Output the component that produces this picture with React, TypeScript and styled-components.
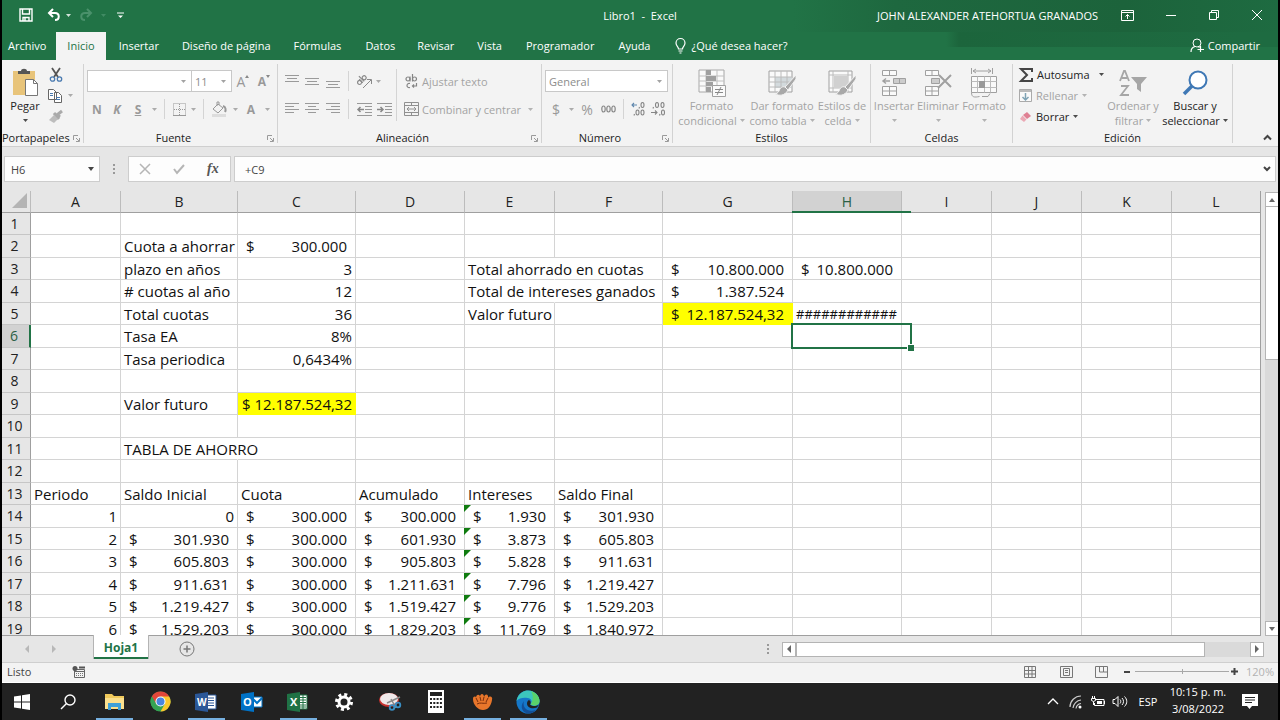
import React from "react";
import styled, { createGlobalStyle, css } from "styled-components";

const UI = `"Open Sans", "Noto Sans", sans-serif`;
const GREEN = "#217346";
const MUTED = "#a3a3a3";

const Global = createGlobalStyle`
  * { box-sizing: border-box; }
  body { margin: 0; background: #000; font: 11px/15px ${UI}; color: #222; }
  button, input, select { font: inherit; color: inherit; margin: 0; padding: 0; border: 0; background: none; border-radius: 0; }
  button { display: flex; align-items: center; justify-content: center; }
  svg { display: block; flex: none; overflow: visible; }
`;

const Window = styled.div`
  display: flex;
  flex-direction: column;
  height: 100vh;
  margin: 0 2px;
  overflow: hidden;
  background: #e6e6e6;
`;

/* ---------- title bar ---------- */
const TitleBar = styled.header`
  display: grid;
  grid-template-columns: 1fr auto 1fr;
  align-items: center;
  height: 32px;
  padding-bottom: 2px;
  color: #fff;
  background: linear-gradient(90deg, ${GREEN} 62%, #1e683f 70%, #1c633b 88%, #1e6b41 100%);
`;
const QuickAccess = styled.div`
  display: flex;
  align-items: center;
  padding-left: 7px;
`;
const QuickButton = styled.button<{ $w: number; $dim?: boolean }>`
  width: ${(p) => p.$w}px;
  height: 24px;
  color: ${(p) => (p.$dim ? "#4a916b" : "#fff")};
`;
const TitleText = styled.span`
  white-space: pre;
`;
const TitleRight = styled.div`
  display: flex;
  align-items: center;
  justify-content: flex-end;
`;
const Account = styled.span`
  margin-right: 8px;
  white-space: nowrap;
`;
const WindowButton = styled.button`
  width: 43px;
  height: 30px;
  color: #fff;
`;

/* ---------- tabs ---------- */
const TabBar = styled.nav`
  display: flex;
  height: 28px;
  color: #fff;
  background:
    linear-gradient(90deg, transparent 74%, #1c653c 75%, #1e6b41 97%) top / 100% 15px no-repeat,
    ${GREEN};
`;
const Tab = styled.button<{ $active?: boolean; $pad: number }>`
  padding: 0 ${(p) => p.$pad}px 1px;
  white-space: nowrap;
  ${(p) => p.$active && css`margin-left: 4px; background: #f3f3f3; color: ${GREEN};`}
`;
const Tell = styled.button`
  gap: 5px;
  margin-left: 13px;
  padding-bottom: 1px;
  white-space: nowrap;
`;
const Share = styled(Tell)`
  margin-left: auto;
  margin-right: 18px;
  gap: 3px;
`;

/* ---------- ribbon ---------- */
const Ribbon = styled.section`
  display: flex;
  height: 87px;
  padding: 4px 0;
  background: #f3f3f3;
  border-bottom: 1px solid #cfcfcf;
`;
const Group = styled.div<{ $w: number }>`
  display: flex;
  flex-direction: column;
  width: ${(p) => p.$w}px;
  height: 79px;
  border-right: 1px solid #d2d2d2;
`;
const GroupBody = styled.div`
  display: flex;
  flex: 1;
`;
const GroupFoot = styled.div`
  display: flex;
  align-items: center;
  height: 10px;
  line-height: 10px;
  font-weight: 500;
  color: #222;
  white-space: nowrap;
`;
const GroupName = styled.span`
  flex: 1;
  text-align: center;
`;
const Launcher = styled.button`
  width: 14px;
  height: 10px;
  color: #9a9a9a;
`;
const RibbonEnd = styled.div`
  display: flex;
  flex: 1;
  align-items: flex-end;
  justify-content: flex-end;
  padding-right: 6px;
  color: #444;
`;
const Big = styled.button<{ $w: number; $on?: boolean }>`
  flex-direction: column;
  justify-content: flex-start;
  width: ${(p) => p.$w}px;
  padding-top: 3px;
  color: ${(p) => (p.$on ? "#222" : MUTED)};
  white-space: nowrap;
`;
const BigIcon = styled.span`
  display: flex;
  align-items: center;
  height: 31px;
`;
const BigLine = styled.span`
  display: flex;
  align-items: center;
  justify-content: center;
  gap: 3px;
  height: 15px;
`;
const Stack = styled.div<{ $w?: number; $gap?: number; $top?: number }>`
  display: flex;
  flex-direction: column;
  gap: ${(p) => p.$gap ?? 6}px;
  padding-top: ${(p) => p.$top ?? 6}px;
  ${(p) => p.$w && css`width: ${p.$w}px;`}
`;
const Line = styled.div<{ $left?: number; $short?: boolean }>`
  display: flex;
  align-items: center;
  height: ${(p) => (p.$short ? 21 : 22)}px;
  padding-left: ${(p) => p.$left ?? 3}px;
  color: #999;
`;
const Tool = styled.button<{ $w: number }>`
  width: ${(p) => p.$w}px;
  height: 20px;
  font-size: 14px;
`;
const Letter = styled.span<{ $italic?: boolean; $line?: boolean }>`
  font-weight: 700;
  font-size: 12px;
  font-style: ${(p) => (p.$italic ? "italic" : "normal")};
  text-decoration: ${(p) => (p.$line ? "underline" : "none")};
`;
const Split = styled.span<{ $tall?: boolean }>`
  flex: none;
  width: 1px;
  height: ${(p) => (p.$tall ? 52 : 20)}px;
  margin: ${(p) => (p.$tall ? "5px 0 0" : "0 5px")};
  background: #d4d4d4;
`;
const Wide = styled.button<{ $on?: boolean; $gap?: number }>`
  justify-content: flex-start;
  gap: ${(p) => p.$gap ?? 3}px;
  height: 20px;
  color: ${(p) => (p.$on ? "#222" : MUTED)};
  white-space: nowrap;
`;
const Spacer = styled.span`
  width: 1px;
`;
const PickBox = styled.label<{ $w: number }>`
  display: grid;
  grid-template-columns: 1fr 10px;
  align-items: center;
  width: ${(p) => p.$w}px;
  height: 22px;
  background: #fff;
  border: 1px solid #c8c8c8;
  color: #8c8c8c;
  & + & { border-left: 0; }
`;
const Pick = styled.select`
  appearance: none;
  width: 100%;
  height: 20px;
  padding-left: 3px;
  outline: 0;
`;

/* ---------- formula bar ---------- */
const FormulaRow = styled.div`
  display: flex;
  align-items: flex-start;
  height: 44px;
  flex: none;
  padding: 9px 2px 0;
`;
const Field = styled.label<{ $w?: number }>`
  display: flex;
  align-items: center;
  height: 26px;
  padding: 0 4px 0 6px;
  background: #fdfdfd;
  border: 1px solid #cdcdcd;
  color: #444;
  ${(p) => (p.$w ? css`width: ${p.$w}px;` : css`flex: 1; padding-left: 10px;`)}
`;
const FieldInput = styled.input`
  flex: 1;
  min-width: 0;
  outline: 0;
`;
const Dots = styled.span`
  display: flex;
  justify-content: center;
  align-items: center;
  width: 28px;
  height: 26px;
`;
const FxBox = styled.div`
  display: flex;
  justify-content: space-around;
  align-items: center;
  width: 103px;
  height: 26px;
  margin-right: 3px;
  background: #fdfdfd;
  border: 1px solid #cdcdcd;
  color: #b5b5b5;
`;
const Fx = styled.button`
  font: italic 700 14px "Liberation Serif", serif;
  color: #555;
`;

/* ---------- sheet ---------- */
const SheetArea = styled.main`
  display: flex;
  flex: 1;
  min-height: 0;
`;
const GridPane = styled.div`
  flex: 1;
  min-width: 0;
  overflow: hidden;
  border-right: 1px solid #9f9f9f;
  border-bottom: 1px solid #9f9f9f;
`;
const Table = styled.table`
  width: 100%;
  table-layout: fixed;
  border-collapse: separate;
  border-spacing: 0;
  background: #fff;
  font-size: 15px;
  line-height: 21px;
  color: #111;
`;
const Col = styled.col<{ $w?: number }>`
  ${(p) => p.$w && css`width: ${p.$w}px;`}
`;
const Row = styled.tr`
  height: 22px;
  &:nth-child(even) { height: 23px; }
`;
const ColHead = styled.th<{ $active?: boolean }>`
  height: 22px;
  padding: 0;
  font-weight: 400;
  font-size: 14px;
  line-height: 21px;
  color: ${(p) => (p.$active ? "#2b6044" : "#222")};
  background: ${(p) => (p.$active ? "#d2d2d2" : "#e6e6e6")};
  border-right: 1px solid #bcbcbc;
  border-bottom: 1px solid #9f9f9f;
  &:last-child { border-right: 0; }
  ${(p) => p.$active && css`
    position: relative;
    z-index: 1;
    &::after {
      content: "";
      position: absolute;
      left: -1px;
      right: -10px;
      bottom: -1px;
      height: 2px;
      background: ${GREEN};
    }
  `}
`;
const Corner = styled.th`
  height: 22px;
  padding: 0 3px 2px 10px;
  background: #e6e6e6;
  border-right: 1px solid #bcbcbc;
  border-bottom: 1px solid #9f9f9f;
`;
const RowHead = styled.th<{ $active?: boolean }>`
  padding: 0 3px 0 0;
  font-weight: 400;
  font-size: 14px;
  line-height: 20px;
  color: ${(p) => (p.$active ? "#2b6044" : "#222")};
  background: ${(p) => (p.$active ? "#d2d2d2" : "#e6e6e6")};
  border-right: ${(p) => (p.$active ? `2px solid ${GREEN}` : "1px solid #9f9f9f")};
  border-bottom: 1px solid #c6c6c6;
`;
const Cell = styled.td<{ $fill?: boolean; $right?: boolean; $spill?: boolean }>`
  position: relative;
  z-index: ${(p) => (p.$spill ? 1 : "auto")};
  padding: 0 3px;
  white-space: nowrap;
  text-align: ${(p) => (p.$right ? "right" : "left")};
  background: ${(p) => (p.$fill ? "#ffff00" : "transparent")};
  border-right: 1px solid ${(p) => (p.$fill ? "#ffff00" : p.$spill ? "#ffffff" : "#d4d4d4")};
  border-bottom: 1px solid ${(p) => (p.$fill ? "#ffff00" : "#d4d4d4")};
  line-height: 20px;
  &:last-child { border-right: 0; }
`;
const Money = styled.span<{ $tight?: boolean }>`
  display: flex;
  justify-content: space-between;
  padding: ${(p) => (p.$tight ? "0 0 0 1px" : "0 5px")};
`;
const Hashes = styled.span`
  font-size: 13px;
`;
const Flag = styled.i`
  position: absolute;
  left: -1px;
  top: 0;
  border-top: 7px solid #107c10;
  border-right: 7px solid transparent;
`;
const Selection = styled.i`
  position: absolute;
  z-index: 2;
  left: -2px;
  right: -11px;
  top: -2px;
  bottom: -2px;
  border: 2px solid ${GREEN};
  &::after {
    content: "";
    position: absolute;
    right: -4px;
    bottom: -4px;
    width: 6px;
    height: 6px;
    background: ${GREEN};
    border: solid #fff;
    border-width: 1px 0 0 1px;
  }
`;
const VScroll = styled.div`
  display: flex;
  flex-direction: column;
  width: 17px;
  padding: 1px 0 0 4px;
`;
const ScrollButton = styled.button`
  flex: none;
  width: 14px;
  height: 15px;
  background: #fff;
  border: 1px solid #b4b4b4;
  color: #666;
`;
const VTrack = styled.div`
  flex: 1;
  width: 14px;
  background: #dadada;
`;
const VThumb = styled.div`
  height: 37%;
  background: #fff;
  border: 1px solid #b4b4b4;
  border-top: 0;
`;

/* ---------- sheet tabs and status ---------- */
const SheetTabs = styled.div`
  display: flex;
  flex: none;
  align-items: center;
  height: 26px;
  color: #b8b8b8;
`;
const NavArrow = styled.button`
  width: 27px;
  height: 24px;
  &:first-child { margin-left: 11px; }
`;
const SheetTab = styled.button`
  align-self: flex-start;
  width: 56px;
  height: 24px;
  margin: -1px 27px 0 26px;
  background: #fff;
  border: solid #b4b4b4;
  border-width: 0 1px;
  box-shadow: inset 0 -2px ${GREEN};
  color: ${GREEN};
  font-weight: 700;
  font-size: 12px;
  position: relative;
`;
const AddSheet = styled.button`
  width: 22px;
  height: 22px;
  color: #777;
`;
const HScroll = styled.div`
  display: flex;
  width: 40%;
  margin: 0 14px 0 auto;
  align-items: center;
`;
const HTrack = styled.div`
  flex: 1;
  height: 15px;
  background: #dadada;
`;
const HThumb = styled.div`
  width: 90%;
  height: 15px;
  background: #fff;
  border: 1px solid #b4b4b4;
`;
const Status = styled.footer`
  display: flex;
  flex: none;
  align-items: center;
  height: 21px;
  padding: 0 4px 2px 5px;
  background: #f3f3f3;
  border-top: 1px solid #cfcfcf;
  border-bottom: 1px solid #fff;
  color: #444;
`;
const StatusIcon = styled.button<{ $w: number }>`
  width: ${(p) => p.$w}px;
  height: 18px;
`;
const StatusRight = styled.div`
  display: flex;
  align-items: center;
  margin-left: auto;
`;
const Zoom = styled.input`
  appearance: none;
  width: 94px;
  height: 11px;
  background:
    linear-gradient(#a8a8a8, #a8a8a8) center / 1px 5px no-repeat,
    linear-gradient(#a8a8a8, #a8a8a8) center / 100% 1px no-repeat;
  &::-webkit-slider-thumb { appearance: none; width: 1px; height: 1px; }
`;
const Percent = styled.span`
  width: 34px;
  text-align: right;
  color: #b2b2b2;
`;

/* ---------- taskbar ---------- */
const Taskbar = styled.div`
  display: flex;
  flex: none;
  height: 37px;
  padding-right: 9px;
  background: #222;
  color: #fff;
`;
const TaskItem = styled.button<{ $running?: boolean }>`
  width: 46px;
  height: 37px;
  color: #fff;
  position: relative;
  &:first-child { margin-left: -3px; }
  ${(p) => p.$running && css`
    &::after {
      content: "";
      position: absolute;
      left: 5px;
      right: 4px;
      bottom: 0;
      height: 2px;
      background: #76b0e0;
    }
  `}
`;
const Tray = styled.div`
  display: flex;
  align-items: center;
  margin-left: auto;
`;
const TrayButton = styled.button<{ $w: number }>`
  width: ${(p) => p.$w}px;
  height: 37px;
`;
const Clock = styled.time`
  width: 66px;
  padding-bottom: 4px;
  text-align: center;
  line-height: 17px;
  white-space: nowrap;
`;

/* ---------- icons ---------- */
type IconProps = { w: number; h: number; sw?: number; children: React.ReactNode };
const Icon = ({ w, h, sw = 1, children }: IconProps) => (
  <svg width={w} height={h} viewBox={`0 0 ${w} ${h}`} fill="none" stroke="currentColor" strokeWidth={sw} aria-hidden="true">
    {children}
  </svg>
);
const Caret = () => (
  <svg width="5" height="3" viewBox="0 0 5 3" aria-hidden="true"><path d="M0 0h5L2.5 3z" fill="currentColor" opacity="0.8" /></svg>
);
const Arrow = ({ d }: { d: "up" | "down" | "left" | "right" }) => (
  <svg width="8" height="8" viewBox="0 0 8 8" fill="currentColor" aria-hidden="true">
    <path d={{ up: "M1 6h6L4 2z", down: "M1 2h6L4 6z", left: "M6 0v8L2 4z", right: "M2 0v8l4-4z" }[d]} />
  </svg>
);
const Lines = ({ rows, top = 0 }: { rows: [number, number][]; top?: number }) => (
  <Icon w={14} h={18}>
    {rows.map(([a, b], i) => <path key={i} d={`M${a} ${top + i * 3 + 0.5}H${b}`} stroke="#9a9a9a" />)}
  </Icon>
);
const DotsIcon = () => (
  <svg width="2" height="11" viewBox="0 0 2 11" fill="#999" aria-hidden="true"><path d="M0 0h2v2H0zM0 4h2v2H0zM0 8h2v2H0z" /></svg>
);
const LaunchIcon = () => (
  <Icon w={7} h={7}><path d="M.5 5V.5H5M3 3l3 3M6.500 3v3.500H3" /></Icon>
);
const Brush = () => (
  <>
    <path d="M29 6l-11 12 3 3 8-11z" fill="#a8a8a8" stroke="#f3f3f3" />
    <path d="M18 18c-3-1-5 1-6 4-1 2-3 3-4 3 4 2 10 2 13-4z" fill="#a8a8a8" stroke="#f3f3f3" />
  </>
);
const TableCells = ({ tone }: { tone: string }) => (
  <>
    <path d="M2 2h23v21H2z" fill="#fafafa" stroke="#a0a0a0" />
    <path d="M8 8h17v11H8z" fill={tone} stroke="none" />
    <path d="M8 2v21M14 2v21M20 2v21M2 8h23M2 13h23M2 18h23" stroke="#bcbcbc" />
  </>
);
/* zeros are small ellipses, commas short strokes */
const DecimalIcon = ({ add }: { add?: boolean }) => (
  <svg width="15" height="14" viewBox="0 0 15 14" fill="none" stroke="#858585" strokeWidth="1.100" aria-hidden="true">
    {add ? (
      <>
        <path d="M6 3H1M3 1L1 3l2 2" stroke="#5f87ad" />
        <path d="M8.500 5L8 6.500M3.500 12L3 13.500" />
        <ellipse cx="11.500" cy="3" rx="1.500" ry="2.500" />
        <ellipse cx="6.500" cy="10.500" rx="1.500" ry="2.500" />
        <ellipse cx="11.500" cy="10.500" rx="1.500" ry="2.500" />
      </>
    ) : (
      <>
        <path d="M0 10.500h6M4 8.500l2 2-2 2" />
        <path d="M2.500 5L2 6.500M9 12l-.5 1.500" />
        <ellipse cx="6" cy="3" rx="1.500" ry="2.500" />
        <ellipse cx="11.500" cy="3" rx="1.500" ry="2.500" />
        <ellipse cx="12" cy="10.500" rx="1.500" ry="2.500" />
      </>
    )}
  </svg>
);

/* ---------- data ---------- */
type Value = { t?: string; n?: string; m?: string; fill?: boolean; tight?: boolean; flag?: boolean; hash?: boolean; sel?: boolean; spill?: boolean };
const LETTERS = ["A", "B", "C", "D", "E", "F", "G", "H", "I", "J", "K", "L"];
const WIDTHS = [90, 117, 118, 109, 90, 108, 130, 109, 90, 90, 90];
const CELLS: Record<string, Value> = {
  B2: { t: "Cuota a ahorrar" }, C2: { m: "300.000" },
  B3: { t: "plazo en años" }, C3: { n: "3" }, E3: { t: "Total ahorrado en cuotas", spill: true }, G3: { m: "10.800.000" }, H3: { m: "10.800.000" },
  B4: { t: "# cuotas al año" }, C4: { n: "12" }, E4: { t: "Total de intereses ganados", spill: true }, G4: { m: "1.387.524" },
  B5: { t: "Total cuotas" }, C5: { n: "36" }, E5: { t: "Valor futuro" }, G5: { m: "12.187.524,32", fill: true }, H5: { t: "############", hash: true },
  B6: { t: "Tasa EA" }, C6: { n: "8%" }, H6: { sel: true },
  B7: { t: "Tasa periodica" }, C7: { n: "0,6434%" },
  B9: { t: "Valor futuro" }, C9: { m: "12.187.524,32", fill: true, tight: true },
  B11: { t: "TABLA DE AHORRO", spill: true },
  A13: { t: "Periodo" }, B13: { t: "Saldo Inicial" }, C13: { t: "Cuota" }, D13: { t: "Acumulado" }, E13: { t: "Intereses" }, F13: { t: "Saldo Final" },
};
const SAVINGS = [
  ["0", "300.000", "1.930", "301.930"],
  ["301.930", "601.930", "3.873", "605.803"],
  ["605.803", "905.803", "5.828", "911.631"],
  ["911.631", "1.211.631", "7.796", "1.219.427"],
  ["1.219.427", "1.519.427", "9.776", "1.529.203"],
  ["1.529.203", "1.829.203", "11.769", "1.840.972"],
];
SAVINGS.forEach(([start, total, interest, end], i) => {
  const r = 14 + i;
  CELLS[`A${r}`] = { n: String(i + 1) };
  CELLS[`B${r}`] = i === 0 ? { n: start } : { m: start };
  CELLS[`C${r}`] = { m: "300.000" };
  CELLS[`D${r}`] = { m: total };
  CELLS[`E${r}`] = { m: interest, flag: true };
  CELLS[`F${r}`] = { m: end };
});

const SheetCell = ({ v }: { v?: Value }) => {
  if (!v) return <Cell />;
  return (
    <Cell $fill={v.fill} $right={!!v.n} $spill={v.spill}>
      {v.flag && <Flag />}
      {v.sel && <Selection />}
      {v.m ? <Money $tight={v.tight}><span>$</span><span>{v.m}</span></Money> : v.hash ? <Hashes>{v.t}</Hashes> : v.t ?? v.n}
    </Cell>
  );
};

const TABS: [string, number][] = [["Insertar", 13], ["Diseño de página", 10], ["Fórmulas", 13], ["Datos", 11], ["Revisar", 11], ["Vista", 12], ["Programador", 12], ["Ayuda", 12]];

const GroupBox = ({ w, name, launcher, children }: { w: number; name: string; launcher?: boolean; children: React.ReactNode }) => (
  <Group $w={w} role="group" aria-label={name}>
    <GroupBody>{children}</GroupBody>
    <GroupFoot>
      <GroupName>{name}</GroupName>
      {launcher && <Launcher aria-label={`Más opciones de ${name}`}><LaunchIcon /></Launcher>}
    </GroupFoot>
  </Group>
);
const BigButton = ({ w, on, icon, lines }: { w: number; on?: boolean; icon: React.ReactNode; lines: string[] }) => (
  <Big $w={w} $on={on}>
    <BigIcon>{icon}</BigIcon>
    <BigLine>{lines[0]}</BigLine>
    <BigLine>{lines[1]}<Caret /></BigLine>
  </Big>
);

export default function App() {
  return (
    <>
      <Global />
      <Window>
        <TitleBar>
          <QuickAccess>
            <QuickButton $w={34} aria-label="Guardar">
              <Icon w={14} h={14}><path d="M1 1h12v12H1zM3.500 1v5h7V1M4 13V9.500h6V13M6 10v3" strokeWidth="1.400" /></Icon>
            </QuickButton>
            <QuickButton $w={22} aria-label="Deshacer">
              <Icon w={14} h={14} sw={2}><path d="M6 1L2 5l4 4M2 5h6c5 0 5 7 0 7" /></Icon>
            </QuickButton>
            <QuickButton $w={7} aria-label="Opciones de deshacer"><Caret /></QuickButton>
            <QuickButton $w={28} $dim aria-label="Rehacer">
              <Icon w={14} h={14} sw={2}><path d="M8 1l4 4-4 4M12 5H6c-5 0-5 7 0 7" /></Icon>
            </QuickButton>
            <QuickButton $w={7} $dim aria-label="Opciones de rehacer"><Caret /></QuickButton>
            <QuickButton $w={26} aria-label="Personalizar">
              <Icon w={7} h={7}><path d="M0 1h7" /><path d="M1 3.500h5L3.500 6z" fill="currentColor" stroke="none" /></Icon>
            </QuickButton>
          </QuickAccess>
          <TitleText>Libro1  -  Excel</TitleText>
          <TitleRight>
            <Account>JOHN ALEXANDER ATEHORTUA GRANADOS</Account>
            <WindowButton aria-label="Opciones de la cinta">
              <Icon w={13} h={11}><path d="M.5.5h12v10H.5zM.5 2.500h12M6.500 9V4.500M4.500 6.500l2-2 2 2" /></Icon>
            </WindowButton>
            <WindowButton aria-label="Minimizar"><Icon w={10} h={10}><path d="M0 5.500h10" /></Icon></WindowButton>
            <WindowButton aria-label="Restaurar"><Icon w={10} h={10}><path d="M.5 2.500h7v7h-7zM2.500 2.500v-2h7v7h-2" /></Icon></WindowButton>
            <WindowButton aria-label="Cerrar"><Icon w={10} h={10}><path d="M0 0l10 10M10 0L0 10" /></Icon></WindowButton>
          </TitleRight>
        </TitleBar>

        <TabBar>
          <Tab $pad={6}>Archivo</Tab>
          <Tab $active $pad={11}>Inicio</Tab>
          {TABS.map(([name, pad]) => <Tab key={name} $pad={pad}>{name}</Tab>)}
          <Tell>
            <Icon w={11} h={16}><path d="M3.500 11C3.500 8.500 1 8 1 5a4.500 4.500 0 019 0c0 3-2.500 3.500-2.500 6zM3.500 13h4M4.500 15h2" strokeWidth="1.200" /></Icon>
            ¿Qué desea hacer?
          </Tell>
          <Share>
            <Icon w={15} h={15}><circle cx="7" cy="5" r="4" /><path d="M1 14c0-3 2-5 4-5.500M8.500 9l1 .5M10.500 8v6M7.500 11.500h6.500" strokeWidth="1.200" /></Icon>
            Compartir
          </Share>
        </TabBar>

        <Ribbon>
          <GroupBox w={82} name="Portapapeles" launcher>
            <Big $w={46} $on>
              <BigIcon>
                <Icon w={28} h={29}>
                  <path d="M2 3h22v24H2z" fill="#e8c47a" stroke="none" />
                  <path d="M7 6V3h3c0-3 6-3 6 0h3v3z" fill="#555" stroke="none" />
                  <path d="M14.500 11.500h8l4 4v12h-12z" fill="#fff" stroke="#777" />
                  <path d="M22.500 11.500v4h4" stroke="#777" />
                </Icon>
              </BigIcon>
              <BigLine>Pegar</BigLine>
              <BigLine><Caret /></BigLine>
            </Big>
            <Stack $gap={0} $top={0}>
              <Line $short $left={0}>
                <Tool $w={15} aria-label="Cortar">
                  <Icon w={14} h={14}><path d="M3 0l6 9M11 0L5 9" stroke="#555" strokeWidth="1.800" /><circle cx="3.500" cy="11" r="2.200" stroke="#4a7ab0" strokeWidth="1.300" /><circle cx="10.500" cy="11" r="2.200" stroke="#4a7ab0" strokeWidth="1.300" /></Icon>
                </Tool>
              </Line>
              <Line $short $left={0}>
                <Tool $w={15} aria-label="Copiar">
                  <Icon w={15} h={14}><path d="M.5.500h5l3 3v7h-8zM6.500 3.500h4l3 3v7h-7z" fill="#fff" stroke="#666" /><path d="M8 8.500h4M8 10.500h4M2 4.500h3M2 6.500h3" stroke="#4a7ab0" /></Icon>
                </Tool>
                <Tool $w={15} aria-label="Opciones de copiar"><Caret /></Tool>
              </Line>
              <Line $short $left={0}>
                <Tool $w={15} aria-label="Copiar formato">
                  <Icon w={14} h={13}><path d="M13 1L8 5M5 3l5 6M7 4l4 3" strokeWidth="3" stroke="#aaa" /><path d="M5 5L0 10l5 3 4-4z" fill="#bdbdbd" stroke="none" /></Icon>
                </Tool>
              </Line>
            </Stack>
          </GroupBox>

          <GroupBox w={194} name="Fuente" launcher>
            <Stack>
              <Line>
                <PickBox $w={105}><Pick aria-label="Fuente"><option></option></Pick><Caret /></PickBox>
                <PickBox $w={40}><Pick aria-label="Tamaño"><option>11</option></Pick><Caret /></PickBox>
                <Tool $w={22} aria-label="Aumentar tamaño">A<Icon w={4} h={14}><path d="M0 4h4L2 1z" fill="#888" stroke="none" /></Icon></Tool>
                <Tool $w={20} aria-label="Reducir tamaño"><Letter>A</Letter><Icon w={4} h={14}><path d="M0 1h4L2 4z" fill="#888" stroke="none" /></Icon></Tool>
              </Line>
              <Line>
                <Tool $w={20}><Letter>N</Letter></Tool>
                <Tool $w={20}><Letter $italic>K</Letter></Tool>
                <Tool $w={22}><Letter $line>S</Letter></Tool>
                <Tool $w={10} aria-label="Tipos de subrayado"><Caret /></Tool>
                <Split />
                <Tool $w={18} aria-label="Bordes"><Icon w={13} h={13}><path d="M.5.500h12v12H.5zM6.500 1v11M1 6.500h11" strokeDasharray="1 1" /><path d="M0 12.500h13" /></Icon></Tool>
                <Tool $w={10} aria-label="Tipos de borde"><Caret /></Tool>
                <Split />
                <Tool $w={20} aria-label="Color de relleno"><Icon w={15} h={15}><path d="M6 2L1 7l5 4 5-5zM5 4V0h2v3" /><path d="M11 4c3 1 3 4 2 6" strokeWidth="2" /><path d="M0 12h14v3H0z" fill="#ddd" stroke="none" /></Icon></Tool>
                <Tool $w={12} aria-label="Colores de relleno"><Caret /></Tool>
                <Tool $w={20}><Letter>A</Letter></Tool>
                <Tool $w={12} aria-label="Colores de fuente"><Caret /></Tool>
              </Line>
            </Stack>
          </GroupBox>

          <GroupBox w={264} name="Alineación" launcher>
            <Stack $w={118}>
              <Line>
                <Tool $w={21} aria-label="Alinear arriba"><Lines top={3} rows={[[0, 14], [2, 12], [0, 14]]} /></Tool>
                <Tool $w={20} aria-label="Alinear en medio"><Lines top={6} rows={[[0, 14], [2, 12], [0, 14]]} /></Tool>
                <Tool $w={21} aria-label="Alinear abajo"><Lines top={9} rows={[[0, 14], [2, 12], [0, 14]]} /></Tool>
                <Split />
                <Tool $w={20} aria-label="Orientación">
                  <svg width="17" height="16" viewBox="0 0 17 16" fill="none" stroke="#8a8a8a" aria-hidden="true">
                    <g transform="rotate(-45 5 8)" strokeWidth="1.200"><circle cx="3" cy="8" r="2" /><path d="M5 5.500V10.500M7 3V10.500" /><circle cx="9.500" cy="8" r="2" /></g>
                    <path d="M7 15l8-8M11 6.500h4.500V11" />
                  </svg>
                </Tool>
                <Tool $w={8} aria-label="Opciones de orientación"><Caret /></Tool>
              </Line>
              <Line>
                <Tool $w={21} aria-label="Alinear a la izquierda"><Lines top={3} rows={[[0, 14], [0, 9], [0, 14], [0, 9]]} /></Tool>
                <Tool $w={20} aria-label="Centrar"><Lines top={3} rows={[[0, 14], [3, 11], [0, 14], [3, 11]]} /></Tool>
                <Tool $w={21} aria-label="Alinear a la derecha"><Lines top={3} rows={[[0, 14], [5, 14], [0, 14], [5, 14]]} /></Tool>
                <Split />
                <Tool $w={20} aria-label="Disminuir sangría"><Icon w={15} h={13}><path d="M0 .5h15M8 3.500h7M8 6.500h7M8 9.500h7M0 12.500h15" /><path d="M7 6.500H1M3.500 4L1 6.500 3.500 9" strokeWidth="1.500" stroke="#888" /></Icon></Tool>
                <Tool $w={20} aria-label="Aumentar sangría"><Icon w={15} h={13}><path d="M0 .5h15M8 3.500h7M8 6.500h7M8 9.500h7M0 12.500h15" /><path d="M0 6.500h6M3.500 4L6 6.500 3.500 9" strokeWidth="1.500" stroke="#888" /></Icon></Tool>
              </Line>
            </Stack>
            <Split $tall />
            <Stack>
              <Line $left={7}>
                <Wide $gap={4}>
                  <Icon w={14} h={15}><g stroke="#858585" strokeWidth="1.200"><circle cx="4" cy="5" r="2" /><path d="M6 2.500v5M8.500 0v7.500" /><circle cx="10.500" cy="5" r="2" /><path d="M6 9.500c-4-1-4 5 0 4M12.500 9v3H8.500M10 10.500L8.500 12l1.500 1.500" /></g></Icon>
                  Ajustar texto
                </Wide>
              </Line>
              <Line $left={7}>
                <Wide>
                  <Icon w={15} h={14}><path d="M.5.500h14v13H.5zM.5 3.500h14M.5 10.500h14M7.500 0v3.500M7.500 10.500V14M3 7h9M5 5L3 7l2 2M10 5l2 2-2 2" stroke="#909090" /></Icon>
                  Combinar y centrar<Spacer /><Caret />
                </Wide>
              </Line>
            </Stack>
          </GroupBox>

          <GroupBox w={131} name="Número" launcher>
            <Stack>
              <Line>
                <PickBox $w={123}><Pick aria-label="Formato de número"><option>General</option></Pick><Caret /></PickBox>
              </Line>
              <Line>
                <Tool $w={22}>$</Tool>
                <Tool $w={9} aria-label="Formatos de moneda"><Caret /></Tool>
                <Tool $w={22}>%</Tool>
                <Tool $w={20} aria-label="Estilo millares"><svg width="15" height="10" viewBox="0 0 15 10" aria-hidden="true"><g fill="none" stroke="#888" strokeWidth="1.200"><ellipse cx="2.500" cy="5" rx="1.700" ry="3" /><ellipse cx="7.500" cy="5" rx="1.700" ry="3" /><ellipse cx="12.500" cy="5" rx="1.700" ry="3" /></g></svg></Tool>
                <Split />
                <Tool $w={19} aria-label="Aumentar decimales"><DecimalIcon add /></Tool>
                <Tool $w={20} aria-label="Disminuir decimales"><DecimalIcon /></Tool>
              </Line>
            </Stack>
          </GroupBox>

          <GroupBox w={198} name="Estilos">
            <BigButton w={77} lines={["Formato", "condicional"]} icon={
              <Icon w={30} h={30}>
                <path d="M2 2h25v22H2z" fill="#fafafa" stroke="#a8a8a8" />
                <path d="M2 8h25M2 13h25M2 18h25M9 2v22M20 2v22" stroke="#c0c0c0" />
                <path d="M9 2h5v5H9zM9 8h10v5H9zM9 14h7v4H9zM9 19h5v5H9z" fill="#a0a0a0" stroke="none" />
                <path d="M15.500 17.500h13v11h-13z" fill="#fafafa" stroke="#a0a0a0" />
                <path d="M18 21.500h8M18 24.500h8M24 19l-4 8" stroke="#888" />
              </Icon>} />
            <BigButton w={64} lines={["Dar formato", "como tabla"]} icon={<Icon w={30} h={28}><TableCells tone="#d3dadd" /><Brush /></Icon>} />
            <BigButton w={56} lines={["Estilos de", "celda"]} icon={
              <Icon w={30} h={28}><path d="M2 2h23v21H2z" fill="#fafafa" stroke="#a0a0a0" /><path d="M2 6h23M2 19h23M6 2v21M21 2v21" stroke="#bcbcbc" /><path d="M7 7h14v12H7z" fill="#d0d0d0" stroke="none" /><Brush /></Icon>} />
          </GroupBox>

          <GroupBox w={142} name="Celdas">
            <BigButton w={46} lines={["Insertar", ""]} icon={
              <Icon w={26} h={28}><g stroke="#a0a0a0"><path d="M1.500 1.500h14v5h-14zM8.500 1.500v5M1.500 17.500h14v9h-14zM8.500 17.500v9M1.500 22h14" fill="#fafafa" /><path d="M12.500 9.500h12v5h-12z" fill="#ccc" /><path d="M18.500 9.500v5" /><path d="M9 12H2M5 9.500L2 12l3 2.500" strokeWidth="1.500" /></g></Icon>} />
            <BigButton w={42} lines={["Eliminar", ""]} icon={
              <Icon w={28} h={28}><g stroke="#a0a0a0"><path d="M1.500 1.500h13v5h-13zM8 1.500v5M1.500 17.500h13v9h-13zM8 17.500v9M1.500 22h13" fill="#fafafa" /><path d="M7.500 9.500h8v5h-8z" fill="#ccc" /><path d="M15 6l12 12M27 6L14 19" strokeWidth="2" /></g></Icon>} />
            <BigButton w={50} lines={["Formato", ""]} icon={
              <Icon w={28} h={30}><g stroke="#a0a0a0"><path d="M1.500 0v6M22.500 0v6M3 3h18M6 1L3 3l3 2M18 1l3 2-3 2" /><path d="M1.500 8.500h25v16h-25z" fill="#fafafa" /><path d="M7.500 8.500v16M14.500 8.500v16M20.500 8.500v16M1.500 13.500h25M1.500 19.500h25" stroke="#bcbcbc" /><path d="M9 13h6v7H9z" fill="#999" stroke="none" /><path d="M1.500 24.500c0 5 3 5 8 4M12 28.500h6l2-3" /></g></Icon>} />
          </GroupBox>

          <GroupBox w={220} name="Edición">
            <Stack $gap={0} $top={0} $w={88}>
              <Line $short $left={6}>
                <Wide $on $gap={4}>
                  <Icon w={14} h={14} sw={2}><path d="M13 4V1H2l6 6-6 6h11v-3" stroke="#444" /></Icon>
                  Autosuma<Spacer /><Caret />
                </Wide>
              </Line>
              <Line $short $left={6}>
                <Wide $gap={4}>
                  <Icon w={13} h={13}><path d="M.5.500h12v12H.5z" stroke="#aaa" fill="#fafafa" /><path d="M1 1h11v2H1z" fill="#bbb" stroke="none" /><path d="M6.500 4v7M3.500 8l3 3 3-3" stroke="#7fa3b5" strokeWidth="1.500" /></Icon>
                  Rellenar<Caret />
                </Wide>
              </Line>
              <Line $short $left={6}>
                <Wide $on $gap={4}>
                  <Icon w={13} h={12}><path d="M8 1l4 4-4 3-4-4z" fill="#df8093" stroke="none" /><path d="M3.500 4.500l4 4L5 11 1 8z" fill="#eba9b5" stroke="none" /></Icon>
                  Borrar<Caret />
                </Wide>
              </Line>
            </Stack>
            <BigButton w={64} lines={["Ordenar y", "filtrar"]} icon={
              <Icon w={28} h={28}><path d="M1 12L5 2h1l4 10M3 9h5M2 17h7L2 26h8" stroke="#a6a6a6" strokeWidth="1.800" /><path d="M12 8h16l-6 7v8l-4-3v-5z" fill="#a6a6a6" stroke="none" /></Icon>} />
            <BigButton w={60} on lines={["Buscar y", "seleccionar"]} icon={
              <Icon w={28} h={28}><circle cx="17" cy="11" r="8.500" fill="#fff" stroke="#3f78b5" strokeWidth="2" /><path d="M11 17l-8 8" stroke="#3f78b5" strokeWidth="3.500" /></Icon>} />
          </GroupBox>
          <RibbonEnd><Icon w={9} h={9} sw={2}><path d="M1 6.500l3.500-3.500L8 6.500" /></Icon></RibbonEnd>
        </Ribbon>

        <FormulaRow>
          <Field $w={96}><FieldInput aria-label="Cuadro de nombres" defaultValue="H6" /><Arrow d="down" /></Field>
          <Dots><DotsIcon /></Dots>
          <FxBox>
            <button aria-label="Cancelar"><Icon w={10} h={10} sw={1.5}><path d="M0 0l10 10M10 0L0 10" /></Icon></button>
            <button aria-label="Introducir"><Icon w={12} h={10} sw={2}><path d="M1 5l3 4 7-8" /></Icon></button>
            <Fx aria-label="Insertar función">fx</Fx>
          </FxBox>
          <Field><FieldInput aria-label="Barra de fórmulas" defaultValue="+C9" /><Icon w={8} h={8} sw={2}><path d="M1 2l3 3 3-3" /></Icon></Field>
        </FormulaRow>

        <SheetArea>
          <GridPane>
            <Table>
              <colgroup>
                <Col $w={29} />
                {WIDTHS.map((w, i) => <Col key={i} $w={w} />)}
                <Col />
              </colgroup>
              <thead>
                <tr>
                  <Corner><svg width="15" height="15" viewBox="0 0 15 15" aria-hidden="true"><path d="M15 0v15H0z" fill="#b4b4b4" /></svg></Corner>
                  {LETTERS.map((l) => <ColHead key={l} $active={l === "H"}>{l}</ColHead>)}
                </tr>
              </thead>
              <tbody>
                {Array.from({ length: 19 }, (_, i) => i + 1).map((r) => (
                  <Row key={r}>
                    <RowHead $active={r === 6}>{r}</RowHead>
                    {LETTERS.map((l) => <SheetCell key={l} v={CELLS[l + r]} />)}
                  </Row>
                ))}
              </tbody>
            </Table>
          </GridPane>
          <VScroll>
            <ScrollButton aria-label="Subir"><Arrow d="up" /></ScrollButton>
            <VTrack><VThumb /></VTrack>
            <ScrollButton aria-label="Bajar"><Arrow d="down" /></ScrollButton>
          </VScroll>
        </SheetArea>

        <SheetTabs>
          <NavArrow aria-label="Hoja anterior"><Arrow d="left" /></NavArrow>
          <NavArrow aria-label="Hoja siguiente"><Arrow d="right" /></NavArrow>
          <SheetTab>Hoja1</SheetTab>
          <AddSheet aria-label="Hoja nueva"><Icon w={16} h={16}><circle cx="8" cy="8" r="7" /><path d="M4.500 8h7M8 4.500v7" strokeWidth="1.500" /></Icon></AddSheet>
          <HScroll>
            <Dots><DotsIcon /></Dots>
            <ScrollButton aria-label="Izquierda"><Arrow d="left" /></ScrollButton>
            <HTrack><HThumb /></HTrack>
            <ScrollButton aria-label="Derecha"><Arrow d="right" /></ScrollButton>
          </HScroll>
        </SheetTabs>

        <Status>
          Listo
          <StatusIcon $w={94} aria-label="Grabar macro">
            <Icon w={13} h={12}><path d="M2.500 3.500h10v8h-10zM3 5.500h9" stroke="#666" /><circle cx="3" cy="2.500" r="2.500" fill="#555" stroke="none" /><path d="M7 1.500h6" stroke="#555" strokeWidth="2" /><path d="M4 7.500h7M4 9.500h7" stroke="#777" strokeDasharray="1 1" /></Icon>
          </StatusIcon>
          <StatusRight>
            <StatusIcon $w={36} aria-label="Normal"><Icon w={12} h={12}><path d="M.5.500h11v11H.5zM4.500 0v12M8 0v12M0 4.500h12M0 8h12" stroke="#777" /></Icon></StatusIcon>
            <StatusIcon $w={36} aria-label="Diseño de página"><Icon w={13} h={12}><path d="M.5.500h12v11H.5zM3.500 2.500h6v7h-6zM5 4.500h3M5 6.500h3" stroke="#777" /></Icon></StatusIcon>
            <StatusIcon $w={35} aria-label="Salto de página"><Icon w={13} h={12}><path d="M.5.500h12v11H.5zM4.500 0v6h4V0M8.500 6h4" stroke="#777" /></Icon></StatusIcon>
            <StatusIcon $w={16} aria-label="Alejar"><Icon w={6} h={6} sw={2}><path d="M0 3h6" /></Icon></StatusIcon>
            <Zoom type="range" aria-label="Zoom" min={10} max={400} defaultValue={120} />
            <StatusIcon $w={11} aria-label="Acercar"><Icon w={7} h={7} sw={2}><path d="M0 3.500h7M3.500 0v7" /></Icon></StatusIcon>
            <Percent>120%</Percent>
          </StatusRight>
        </Status>

        <Taskbar>
          <TaskItem aria-label="Inicio"><svg width="16" height="16" viewBox="0 0 16 16" fill="#fff" aria-hidden="true"><path d="M0 2.500L7 1.500V7.500H0zM8 1.300L16 0v7.500H8zM0 8.500h7v6L0 13.500zM8 8.500h8V16l-8-1.300z" /></svg></TaskItem>
          <TaskItem aria-label="Buscar"><Icon w={16} h={16} sw={1.4}><circle cx="10" cy="6" r="5" /><path d="M6.500 9.500L1 15" /></Icon></TaskItem>
          <TaskItem $running aria-label="Explorador de archivos"><svg width="21" height="18" viewBox="0 0 21 18" aria-hidden="true"><path d="M1 1h7l2 2h10v13H1z" fill="#f1ca5c" /><path d="M1 5h19v11H1z" fill="#fbe08d" /><path d="M4 10h13v7h-3v-3H7v3H4z" fill="#3ea0d8" /></svg></TaskItem>
          <TaskItem aria-label="Chrome"><svg width="21" height="21" viewBox="0 0 21 21" aria-hidden="true"><circle cx="10.500" cy="10.500" r="10" fill="#35a354" /><path d="M10.500 10.500L1.800 5.500A10 10 0 0119.200 5.500z" fill="#e2473a" /><path d="M10.500 5.500h8.700A10 10 0 0110.500 20.500l4.300-7.500z" fill="#fbc82d" /><path d="M1.800 5.500L6.200 13l4.300-2.500L10 5.500z" fill="#e2473a" /><path d="M1.800 5.500L6.200 13l4.300 2-2 5.300A10 10 0 011.800 5.500z" fill="#35a354" /><circle cx="10.500" cy="10.500" r="5" fill="#fff" /><circle cx="10.500" cy="10.500" r="4" fill="#4a86e0" /></svg></TaskItem>
          <TaskItem $running aria-label="Word"><svg width="22" height="20" viewBox="0 0 22 20" aria-hidden="true"><path d="M11 3h10v14H11z" fill="#fff" stroke="#2b5797" /><path d="M13 6h6M13 8.500h6M13 11h6M13 13.500h6" stroke="#2b5797" /><path d="M0 2l13-2v20L0 18z" fill="#2b5797" /><text x="2" y="14" fontSize="10" fontWeight="700" fontFamily="Open Sans" fill="#fff">W</text></svg></TaskItem>
          <TaskItem aria-label="Outlook"><svg width="22" height="20" viewBox="0 0 22 20" aria-hidden="true"><path d="M11 5h10v10H11z" fill="#fff" stroke="#0072c6" /><path d="M12 7l4 4 5-5" stroke="#0072c6" strokeWidth="2" fill="none" /><path d="M0 2l13-2v20L0 18z" fill="#0072c6" /><text x="2" y="14" fontSize="11" fontWeight="700" fontFamily="Open Sans" fill="#fff">O</text></svg></TaskItem>
          <TaskItem $running aria-label="Excel"><svg width="22" height="20" viewBox="0 0 22 20" aria-hidden="true"><path d="M11 3h9v14h-9z" fill="#fff" stroke="#207245" /><path d="M13 5.500h6M13 8h6M13 10.500h6M13 13h6M13 15h6" stroke="#207245" /><path d="M16 3v14" stroke="#207245" /><path d="M0 2l13-2v20L0 18z" fill="#207245" /><text x="3" y="14" fontSize="11" fontWeight="700" fontFamily="Open Sans" fill="#fff">X</text></svg></TaskItem>
          <TaskItem aria-label="Configuración"><Icon w={18} h={18}><circle cx="9" cy="9" r="5" strokeWidth="3" /><circle cx="9" cy="9" r="7.500" strokeWidth="3" strokeDasharray="3 2.890" /></Icon></TaskItem>
          <TaskItem aria-label="Recortes"><svg width="23" height="19" viewBox="0 0 23 19" aria-hidden="true"><ellipse cx="10" cy="8" rx="10" ry="7" fill="#c8312f" /><ellipse cx="10" cy="7" rx="9" ry="6" fill="#efe9ea" /><path d="M8 11l13-6M12 7l5 9" stroke="#888" strokeWidth="1.500" /><g fill="none" stroke="#3a8fc4" strokeWidth="1.800"><circle cx="13" cy="15.500" r="2.300" /><circle cx="19" cy="13" r="2.300" /></g></svg></TaskItem>
          <TaskItem aria-label="Calculadora"><svg width="18" height="23" viewBox="0 0 18 23" aria-hidden="true"><path d="M1 0h16v23H1z" fill="#fff" /><path d="M3 2h12v4H3z" fill="#222" /><path d="M3 9h12M3 13h12M3 17h12" stroke="#222" strokeWidth="2" strokeDasharray="2 1.300" /></svg></TaskItem>
          <TaskItem $running aria-label="Puño"><svg width="21" height="19" viewBox="0 0 21 19" aria-hidden="true"><path d="M1 7c0-3 3-3 3-1 0-4 4-4 4-1 0-4 4-4 4 0 1-4 5-3 4 1 2-3 5-1 4 2-1 6-4 10-9 10S1 13 1 7z" fill="#e8762b" /><path d="M4 6l2 4M8 5l1 4M12 5l-1 4M16 6l-2 4M5 12c3-2 6 0 10-1" stroke="#7a2d0c" fill="none" /></svg></TaskItem>
          <TaskItem $running aria-label="Edge"><svg width="24" height="24" viewBox="0 0 24 24" aria-hidden="true"><circle cx="12" cy="12" r="11.500" fill="#1577c8" /><path d="M.5 11C2 3 8 .5 12 .5c8 0 12 7 11.500 11-.5 4-6 5-9 3 2-3 1-6-3-6.500C7 7.500 3 8 .5 11z" fill="#3cc6bd" /><path d="M15 1c6 2 9 7 8.500 11-.8 4-6 4.500-9 2.500 3-4 3-9 .5-13.500z" fill="#5ad36b" /><path d="M8 11c-2 6 3 12 12 9-2 2.500-5 3.500-8 3.500C7 23 3 17 8 11z" fill="#134f96" /><path d="M13 10c2 1 2 3 1 4.500 2 2 6 2 9 0l-2 3c-5 2-10 0-10-4 0-2 1-3 2-3.500z" fill="#222" /></svg></TaskItem>
          <Tray>
            <TrayButton $w={24} aria-label="Iconos ocultos"><Icon w={12} h={7} sw={1.3}><path d="M1 6l5-5 5 5" /></Icon></TrayButton>
            <TrayButton $w={22} aria-label="Wi-Fi"><Icon w={14} h={14} sw={1.2}><path d="M1 12A11 11 0 0112 1M4 13a9 9 0 018-8M7 13.500a6 6 0 015-5" stroke="#ccc" /><circle cx="11" cy="12" r="1.500" fill="#fff" stroke="none" /></Icon></TrayButton>
            <TrayButton $w={22} aria-label="Batería"><Icon w={16} h={12}><path d="M6 3.500h8v6H4.500V7M14.500 5v3M2.500 0v3M4.500 0v3M1.500 2.500h4v2l-2 1-2-1zM3.500 5.500V9" /><path d="M7 5h5v3H7z" fill="#fff" stroke="none" /></Icon></TrayButton>
            <TrayButton $w={22} aria-label="Volumen"><Icon w={16} h={13}><path d="M1 4.500h2l3-3v10l-3-3H1zM8 4.500c1 1 1 3 0 4M10 3c2 2 2 5 0 7M12.500 1.500c3 3 3 7 0 10" /></Icon></TrayButton>
            <TrayButton $w={34}>ESP</TrayButton>
            <Clock>10:15 p. m.<br />3/08/2022</Clock>
            <TrayButton $w={38} aria-label="Notificaciones"><svg width="16" height="16" viewBox="0 0 16 16" aria-hidden="true"><path d="M0 0h16v12h-6l-2.500 3L5 12H0z" fill="#fff" /><path d="M3 3.500h10M3 6h10M3 8.500h7" stroke="#222" /></svg></TrayButton>
          </Tray>
        </Taskbar>
      </Window>
    </>
  );
}
